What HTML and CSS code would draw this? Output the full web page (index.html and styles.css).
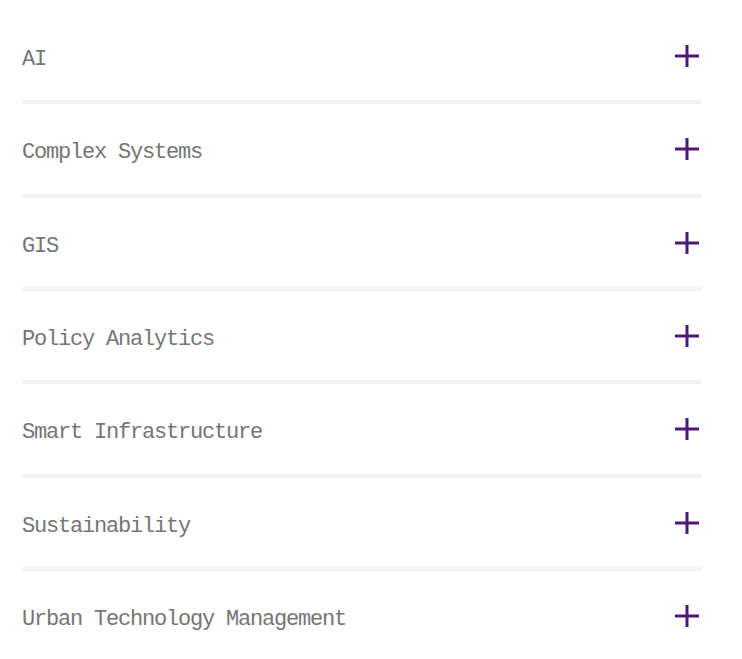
FILE: index.html
```html
<!DOCTYPE html>
<html>
<head>
    <title>Research Areas</title>
    <link rel="stylesheet" href="styles.css">
</head>
<body>

    <!-- Research area accordion -->
    <div class="accordion">
        <div class="item">
            <div class="item-head">
                <span class="item-title">AI</span>
                <svg class="plus" viewBox="0 0 24 24"><path d="M12 1v22M0 12h24"/></svg>
            </div>
        </div>
        <div class="item">
            <div class="item-head">
                <span class="item-title">Complex Systems</span>
                <svg class="plus" viewBox="0 0 24 24"><path d="M12 1v22M0 12h24"/></svg>
            </div>
        </div>
        <div class="item">
            <div class="item-head">
                <span class="item-title">GIS</span>
                <svg class="plus" viewBox="0 0 24 24"><path d="M12 1v22M0 12h24"/></svg>
            </div>
        </div>
        <div class="item">
            <div class="item-head">
                <span class="item-title">Policy Analytics</span>
                <svg class="plus" viewBox="0 0 24 24"><path d="M12 1v22M0 12h24"/></svg>
            </div>
        </div>
        <div class="item">
            <div class="item-head">
                <span class="item-title">Smart Infrastructure</span>
                <svg class="plus" viewBox="0 0 24 24"><path d="M12 1v22M0 12h24"/></svg>
            </div>
        </div>
        <div class="item">
            <div class="item-head">
                <span class="item-title">Sustainability</span>
                <svg class="plus" viewBox="0 0 24 24"><path d="M12 1v22M0 12h24"/></svg>
            </div>
        </div>
        <div class="item">
            <div class="item-head">
                <span class="item-title">Urban Technology Management</span>
                <svg class="plus" viewBox="0 0 24 24"><path d="M12 1v22M0 12h24"/></svg>
            </div>
        </div>
    </div>

</body>
</html>
```

FILE: styles.css
```css
/* General Body Styles */
body {
    margin: 0;
    padding: 0;
    background-color: #fff;
    font-family: 'Liberation Mono', 'DejaVu Sans Mono', monospace;
}

/* Accordion */
.accordion {
    width: 680px;
    padding: 11px 0 0 22px;
}

.item {
    border-bottom: 4px solid #f2f2f2;
    border-radius: 3px;
}

.item-head {
    height: 84.33px;
    padding-top: 5px;
    display: flex;
    align-items: center;
    justify-content: space-between;
}

.item-title {
    margin-top: 3px;
    font-size: 22px;
    letter-spacing: -1.2px;
    color: #757575;
}

.plus {
    width: 24px;
    height: 24px;
    margin: 0 3px 4px 0;
    fill: none;
    stroke: #4b1878;
    stroke-width: 3;
}
```
